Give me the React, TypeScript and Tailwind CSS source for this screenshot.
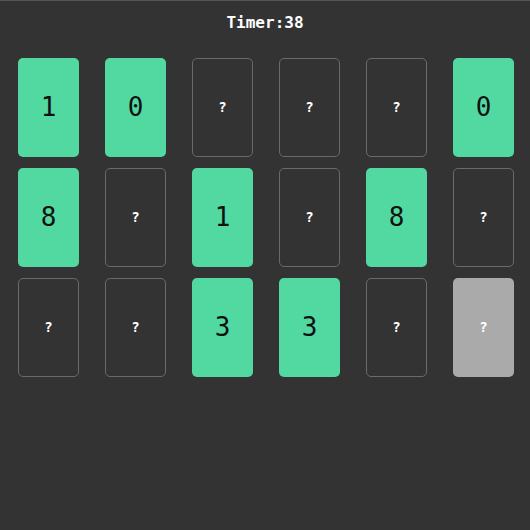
const cards: (string | null)[] = [
  "1", "0", null, null, null, "0",
  "8", null, "1", null, "8", null,
  null, null, "3", "3", null, "gray",
];

export default function App() {
  return (
    <div className="min-h-[530px] w-[530px] bg-[#333333] border-t border-[#555555] font-['DejaVu_Sans_Mono',monospace]">
      <h1 className="pt-[12px] text-center text-[16px] font-bold leading-[20px] text-white">Timer:38</h1>
      <div className="mt-[25px] grid grid-cols-[repeat(6,61px)] gap-x-[26px] gap-y-[11px] pl-[18px]">
        {cards.map((c, i) => {
          if (c === "gray") {
            return (
              <div key={i} className="flex h-[99px] items-center justify-center rounded-[5px] bg-[#aaaaaa] text-[14px] font-bold text-white">
                ?
              </div>
            );
          }
          if (c) {
            return (
              <div key={i} className="flex h-[99px] items-center justify-center rounded-[5px] bg-[#52d9a2] text-[26px] text-[#111111]">
                {c}
              </div>
            );
          }
          return (
            <div key={i} className="flex h-[99px] items-center justify-center rounded-[5px] border border-[#6a6a6a] text-[14px] font-bold text-white">
              ?
            </div>
          );
        })}
      </div>
    </div>
  );
}
